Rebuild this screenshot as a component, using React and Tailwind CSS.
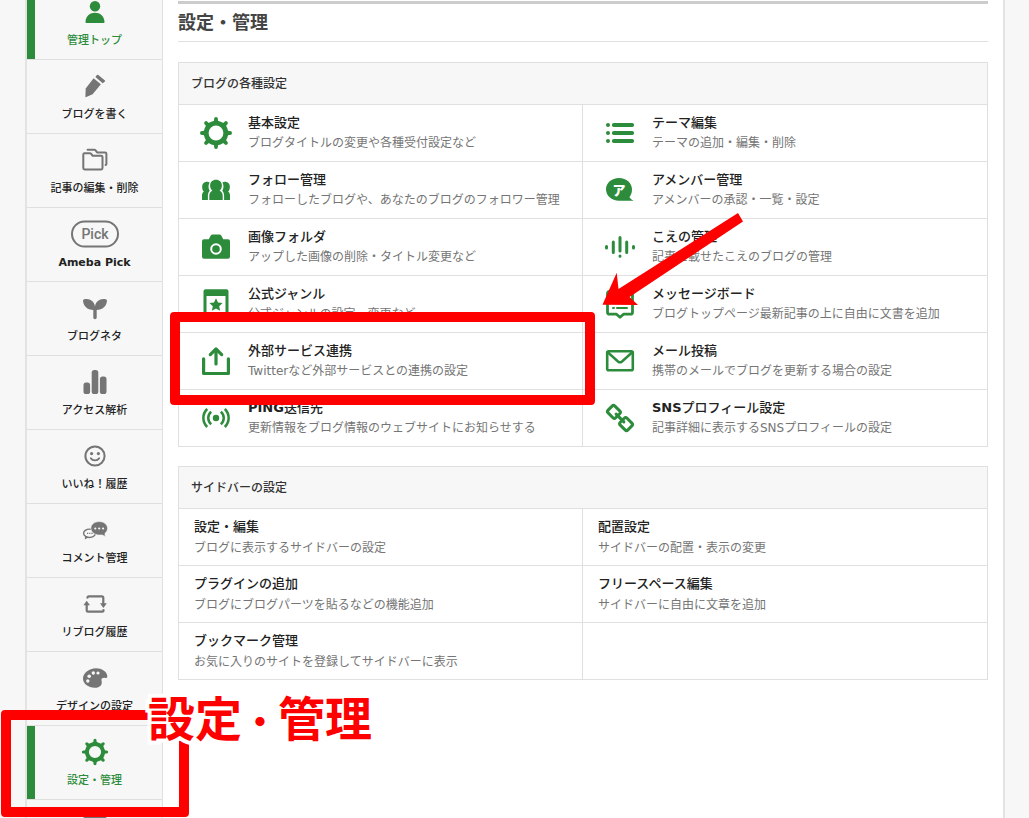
import React from "react";

const star = "M16 10.2l2 4.2 4.6.6-3.4 3.2.9 4.6-4.1-2.3-4.1 2.3.9-4.6-3.4-3.2 4.6-.6z";

function Svg({ box = 28, w, className = "", children }) {
  return (
    <svg
      aria-hidden="true"
      width={w || box}
      height={box}
      viewBox={`0 0 ${w || box} ${box}`}
      fill="currentColor"
      className={`block shrink-0 overflow-visible ${className}`}
    >
      {children}
    </svg>
  );
}

const line = (width) => ({
  fill: "none",
  stroke: "currentColor",
  strokeWidth: width,
  strokeLinecap: "round",
  strokeLinejoin: "round",
});

function GearShape() {
  return (
    <g>
      <circle cx="16" cy="16" r="9.8" fill="none" stroke="currentColor" strokeWidth="4.8" />
      {[0, 45, 90, 135, 180, 225, 270, 315].map((a) => (
        <path
          key={a}
          d="M12 5.8L14.1 3.4V2q0-2 1.9-2t1.9 2v1.4l2.1 2.4z"
          transform={`rotate(${a} 16 16)`}
        />
      ))}
    </g>
  );
}

/* Navigation icons */
const Person = () => (
  <Svg>
    <circle cx="14" cy="8.2" r="5.2" />
    <path d="M5.5 25q-1.2 0-1-1.6C5 18 9 14.8 14 14.8s9 3.2 9.5 8.6q.2 1.6-1 1.6z" />
  </Svg>
);
const Pencil = () => (
  <Svg>
    <path d="M12.6 6.3L19.900 12.200 11.600 22.300 5.300 25.100Q4.400 25.400 4.400 24.500L4.700 16.600z" />
    <path d="M15.900 3.100Q16.500 2.400 17.300 3L23.700 8.200Q24.500 8.800 23.900 9.500L21.700 11.200 14.400 5z" />
  </Svg>
);
const Folders = () => (
  <Svg>
    <path {...line(2)} d="M3.600 7.200h5.300q.8 0 1.300.6l1.500 2h8.500q1.300 0 1.300 1.300v11q0 1.300-1.300 1.300H3.600q-1.300 0-1.300-1.300V8.500q0-1.300 1.300-1.300z" />
    <path {...line(2)} d="M6.600 3.800h6.700q.8 0 1.300.6l1.500 2h8q1.300 0 1.300 1.300v10q0 1-.8 1.300" />
  </Svg>
);
const Pick = () => (
  <Svg w={48}>
    <rect x="1" y="1.500" width="46" height="25" rx="12.500" fill="none" stroke="currentColor" strokeWidth="2" />
    <text x="24" y="18.500" textAnchor="middle" fontSize="14" fontWeight="500" fontFamily="Roboto, sans-serif">
      Pick
    </text>
  </Svg>
);
const Sprout = () => (
  <Svg>
    <path d="M2 6.500q.2-.9 1.200-1.200c5-1.400 10 1.500 10.800 7.200.8-5.700 5.800-8.600 10.800-7.200q1 .3 1.200 1.200c-.2 5.500-4.500 9.500-10.300 9.500v7.600q0 1.600-1.700 1.600t-1.700-1.600V16C6.500 16 2.200 12 2 6.500z" />
  </Svg>
);
const Bars = () => (
  <Svg>
    <rect x="2.500" y="14.500" width="6.600" height="11.500" rx="2.600" />
    <rect x="10.700" y="2" width="6.600" height="24" rx="2.600" />
    <rect x="18.900" y="8.500" width="6.600" height="17.500" rx="2.600" />
  </Svg>
);
const Smile = () => (
  <Svg>
    <circle cx="14" cy="14" r="9.600" fill="none" stroke="currentColor" strokeWidth="2" />
    <circle cx="10.600" cy="11.600" r="1.600" />
    <circle cx="17.400" cy="11.600" r="1.600" />
    <path {...line(1.800)} d="M9.800 16.200c1.800 2.900 6.600 2.900 8.400 0" />
  </Svg>
);
const Comments = () => (
  <Svg>
    <ellipse cx="8.500" cy="17.300" rx="5.900" ry="4.200" fill="none" stroke="currentColor" strokeWidth="1.400" />
    <path d="M4.200 19.500l-.4 3.900 4-2.200z" />
    <path d="M6 17.400h5.600" stroke="currentColor" strokeWidth="1.200" strokeDasharray="1.200 1" />
    <path d="M18.200 5.600c4.700 0 8.300 2.900 8.300 6.700 0 2.200-1 3.900-2.600 5.100l.4 3-3.200-1.500c-6 1-11.200-2-11.200-6.600 0-3.800 3.600-6.700 8.300-6.700z" stroke="#f7f7f7" strokeWidth="0.600" />
    <g fill="#f7f7f7">
      <circle cx="14.300" cy="12.500" r="1.100" />
      <circle cx="18.200" cy="12.500" r="1.100" />
      <circle cx="22.100" cy="12.500" r="1.100" />
    </g>
  </Svg>
);
const Reblog = () => (
  <Svg>
    <path {...line(2.200)} d="M6.500 7.700q0-1.400 1.400-1.400h13q1.400 0 1.400 1.400V14" />
    <path {...line(2.200)} d="M5.700 14v6.300q0 1.400 1.400 1.400h14q1.400 0 1.400-1.400V20" />
    <path d="M19 13.300h6.800l-3.400 4.600zM2.400 15.300h6.600L5.700 10.800z" />
  </Svg>
);
const Palette = () => (
  <Svg>
    <path d="M15 4.300c5.800 0 10.700 3.300 11.300 7.600.2 1.600-.8 2.200-2.200 2-2.500-.4-4.300.8-3.500 3 1 3.500-1.400 6.800-6.800 6.800C7 23.700 2 19.800 2 14.600S7.700 4.300 15 4.300z" />
    <g fill="#f7f7f7">
      <circle cx="6.800" cy="17" r="1.700" />
      <circle cx="8.200" cy="12.200" r="1.800" />
      <circle cx="12.300" cy="9" r="1.700" />
      <circle cx="17" cy="9" r="1.600" />
    </g>
  </Svg>
);
const NavGear = () => (
  <svg aria-hidden="true" width="28" height="28" viewBox="-1 -1 34 34" fill="currentColor" className="block">
    <GearShape />
  </svg>
);
const Monitor = () => (
  <Svg>
    <rect x="2" y="5" width="24" height="18" rx="2" />
  </Svg>
);

/* Settings icons */
const Gear = () => (
  <Svg box={32}>
    <GearShape />
  </Svg>
);
const Followers = () => (
  <Svg box={32}>
    <path d="M5.500 8c1.500-.4 3.200-.3 4.100.4-1.600 2.800-1.400 6 .2 8.400-1.300 1.200-1.900 3-1.900 5V26H2v-4.500c0-1.900.5-3.100 1.900-3.800C2.300 16 2 14.300 2.200 12c.2-2 1.400-3.500 3.300-4z" />
    <path d="M26.500 8c-1.500-.4-3.200-.3-4.100.4 1.600 2.800 1.400 6-.2 8.400 1.300 1.200 1.900 3 1.900 5V26H30v-4.500c0-1.900-.5-3.100-1.900-3.800 1.600-1.700 1.900-3.400 1.700-5.700-.2-2-1.400-3.500-3.300-4z" />
    <path d="M16 5.800c3.500 0 5.900 2.400 5.900 5.600 0 2.500-.9 4-2.300 5.300 2 .9 3.100 2.600 3.100 5V26H9.300v-4.300c0-2.400 1.100-4.100 3.100-5-1.400-1.300-2.300-2.800-2.300-5.300 0-3.200 2.400-5.600 5.900-5.600z" />
  </Svg>
);
const Camera = () => (
  <Svg box={32}>
    <path d="M12.500 3.500h7q1.200 0 1.900 1.200L23.200 8.300H28q2 0 2 2v15.400q0 2-2 2H4q-2 0-2-2V10.300q0-2 2-2h4.800l1.800-3.600q.7-1.200 1.900-1.200z" />
    <circle cx="16" cy="18" r="4.800" fill="none" stroke="white" strokeWidth="2" />
  </Svg>
);
const Genre = () => (
  <Svg box={32}>
    <path
      fillRule="evenodd"
      d="M5.500 1.300h21q2 0 2 2v25.400q0 2-2 2h-21q-2 0-2-2V3.300q0-2 2-2zM6.500 8v19h19V8z"
    />
    <path d={star} />
  </Svg>
);
const Share = () => (
  <Svg box={32}>
    <path {...line(3.200)} d="M3.600 13.800v14.700h24.800V13.800M16 19V5" />
    <path {...line(3.200)} d="M10.300 9.600L16 4l5.700 5.600" />
  </Svg>
);
const Ping = () => (
  <Svg box={32}>
    <circle cx="16" cy="16" r="3.200" />
    <path {...line(2.500)} strokeLinecap="butt" d="M11.200 9.800a8 8 0 0 0 0 12.400M20.800 9.800a8 8 0 0 1 0 12.400M7.200 7a12.500 12.500 0 0 0 0 18M24.800 7a12.500 12.500 0 0 1 0 18" />
  </Svg>
);
const List = () => (
  <Svg box={32}>
    {[8, 16, 24].map((y) => (
      <g key={y}>
        <circle cx="4" cy={y} r="2" />
        <rect x="8" y={y - 2} width="22" height="4" rx="1.800" />
      </g>
    ))}
  </Svg>
);
const Member = () => (
  <Svg box={32}>
    <path d="M15 4c7.500 0 13 5 13 11.300 0 3.600-1 5.900-2.600 8 1.100 1.600 2.300 2.500 4.300 3.400H15C7.500 26.700 2 21.600 2 15.300S7.500 4 15 4z" />
    <text x="15" y="20.500" fill="white" textAnchor="middle" fontSize="13" fontWeight="900" fontFamily="Noto Sans CJK JP, sans-serif">
      ア
    </text>
  </Svg>
);
const Voice = () => (
  <Svg box={32}>
    <path {...line(3)} d="M2.500 15.500v1.500M9.300 11v10.500M16 6.500V20M16 25v.2M22.700 11v10.500M29.500 15.500v1.500" />
  </Svg>
);
const Board = () => (
  <Svg box={32}>
    <path {...line(2.800)} d="M5.500 3.500h21q2 0 2 2v18.700q0 2-2 2h-7L16 29.300l-3.500-3.100h-7q-2 0-2-2V5.500q0-2 2-2z" />
    <path {...line(2)} d="M9 10h1M13 10h10M9 15h1M13 15h10M9 20h1M13 20h10" />
  </Svg>
);
const Mail = () => (
  <Svg box={32}>
    <rect x="3.200" y="6.200" width="25.600" height="19" rx="1.500" {...line(2.600)} />
    <path {...line(2.400)} d="M4 7.500l10 9q2 1.700 4 0l10-9" />
  </Svg>
);
const Link = () => (
  <Svg box={32}>
    <g {...line(3)} transform="rotate(45 16 16)">
      <rect x="2" y="11.200" width="10.800" height="9.600" rx="2" />
      <rect x="19.200" y="11.200" width="10.800" height="9.600" rx="2" />
      <path d="M10.500 16h11" />
    </g>
  </Svg>
);

const navItems = [
  { label: "管理トップ", icon: Person, active: true },
  { label: "ブログを書く", icon: Pencil },
  { label: "記事の編集・削除", icon: Folders },
  { label: "Ameba Pick", icon: Pick },
  { label: "ブログネタ", icon: Sprout },
  { label: "アクセス解析", icon: Bars },
  { label: "いいね！履歴", icon: Smile },
  { label: "コメント管理", icon: Comments },
  { label: "リブログ履歴", icon: Reblog },
  { label: "デザインの設定", icon: Palette },
  { label: "設定・管理", icon: NavGear, active: true, marked: true },
  { label: "", icon: Monitor },
];

const blogSettings = [
  { title: "基本設定", text: "ブログタイトルの変更や各種受付設定など", icon: Gear },
  { title: "テーマ編集", text: "テーマの追加・編集・削除", icon: List },
  { title: "フォロー管理", text: "フォローしたブログや、あなたのブログのフォロワー管理", icon: Followers },
  { title: "アメンバー管理", text: "アメンバーの承認・一覧・設定", icon: Member },
  { title: "画像フォルダ", text: "アップした画像の削除・タイトル変更など", icon: Camera },
  { title: "こえの管理", text: "記事に載せたこえのブログの管理", icon: Voice },
  { title: "公式ジャンル", text: "公式ジャンルの設定、変更など", icon: Genre },
  { title: "メッセージボード", text: "ブログトップページ最新記事の上に自由に文書を追加", icon: Board, arrow: true },
  { title: "外部サービス連携", text: "Twitterなど外部サービスとの連携の設定", icon: Share, marked: true },
  { title: "メール投稿", text: "携帯のメールでブログを更新する場合の設定", icon: Mail },
  { title: "PING送信先", text: "更新情報をブログ情報のウェブサイトにお知らせする", icon: Ping },
  { title: "SNSプロフィール設定", text: "記事詳細に表示するSNSプロフィールの設定", icon: Link },
];

const sidebarSettings = [
  { title: "設定・編集", text: "ブログに表示するサイドバーの設定" },
  { title: "配置設定", text: "サイドバーの配置・表示の変更" },
  { title: "プラグインの追加", text: "ブログにブログパーツを貼るなどの機能追加" },
  { title: "フリースペース編集", text: "サイドバーに自由に文章を追加" },
  { title: "ブックマーク管理", text: "お気に入りのサイトを登録してサイドバーに表示" },
  {},
];

/* Latin words in labels are set bold beside medium Japanese text. */
function Label({ text }) {
  return text.split(/([A-Za-z][A-Za-z ]*)/).map((part, i) =>
    i % 2 ? (
      <span key={i} className="font-bold">
        {part}
      </span>
    ) : (
      part
    ),
  );
}

function NavItem({ label, icon: Icon, active, marked }) {
  return (
    <li className="relative border-b border-[#e0e0e0]">
      <a
        href="#"
        aria-label={label || "その他"}
        className={`flex h-[73px] flex-col items-center pt-3 ${active ? "text-[#2d8c3c]" : "text-[#757575]"}`}
      >
        <Icon />
        <span className={`mt-[5px] text-[11px] leading-5 font-medium ${active ? "" : "text-[#222]"}`}>
          <Label text={label} />
        </span>
      </a>
      {active && <span className="absolute inset-y-0 left-0 w-2 bg-[#2d8c3c]" />}
      {marked && (
        <>
          <span className="pointer-events-none absolute -top-4 -right-[27px] -bottom-[18px] -left-[26px] z-10 rounded border-10 border-[#ff0000]" />
          <span className="pointer-events-none absolute -top-10 left-[121px] z-20 text-[47px] leading-[68px] font-bold whitespace-nowrap text-[#ff0000] [-webkit-text-stroke:8px_white] [paint-order:stroke_fill] [stroke-linejoin:round]">
            設定<span className="text-4xl">・</span>管理
          </span>
        </>
      )}
    </li>
  );
}

function Cell({ title, text, icon: Icon, marked, arrow }) {
  return (
    <li className="relative border-t border-[#e0e0e0] odd:border-r">
      {title ? (
        <a href="#" className={`flex h-14 items-center gap-4 ${Icon ? "pl-[21px]" : "pl-[15px]"}`}>
          {Icon && (
            <span className="text-[#2d8c3c]">
              <Icon />
            </span>
          )}
          <span className="flex flex-col whitespace-nowrap">
            <span className={`text-[13px] font-medium text-[#222] ${Icon ? "leading-5" : "leading-[22px]"}`}>
              <Label text={title} />
            </span>
            <span className="text-xs leading-5 text-[#757575]">{text}</span>
          </span>
        </a>
      ) : (
        <div className="h-14" />
      )}
      {marked && (
        <span className="pointer-events-none absolute -top-[21px] -right-[13px] -bottom-4 -left-[9px] z-10 rounded border-10 border-[#ff0000]" />
      )}
      {arrow && (
        <svg
          aria-hidden="true"
          width="142"
          height="94"
          viewBox="602 212 142 94"
          className="pointer-events-none absolute -top-16 left-[19px] z-10"
        >
          <path d="M738 213l5 8.500-113.500 75.500 8.500 8-35.500-.3 14.200-32 1.800 16.300z" fill="#ff0000" />
        </svg>
      )}
    </li>
  );
}

function Panel({ title, items, className }) {
  return (
    <section className={`border border-[#e0e0e0] ${className}`}>
      <h2 className="flex h-[41px] items-center bg-[#f7f7f7] pl-3 text-xs font-medium text-[#333]">{title}</h2>
      <ul className="grid grid-cols-2">
        {items.map((item, i) => (
          <Cell key={i} {...item} />
        ))}
      </ul>
    </section>
  );
}

export default function App() {
  return (
    <div
      lang="ja"
      className="h-screen overflow-hidden bg-[#f7f7f7] pr-6 pl-[25px] font-['DejaVu_Sans','Noto_Sans_CJK_JP',sans-serif]"
    >
      <div className="flex min-h-screen border-x-2 border-[#e3e3e3] bg-white">
        <nav className="-mt-3.5 h-fit w-[136px] shrink-0 border-r border-[#e0e0e0] bg-[#f7f7f7]">
          <ul>
            {navItems.map((item, i) => (
              <NavItem key={i} {...item} />
            ))}
          </ul>
        </nav>
        <main className="min-w-0 flex-1 px-[15px] pt-px">
          <h1 className="flex h-[41px] items-center border-t-3 border-b border-t-[#ccc] border-b-[#e0e0e0] text-lg leading-none font-bold text-[#444]">
            設定・管理
          </h1>
          <Panel title="ブログの各種設定" items={blogSettings} className="mt-5" />
          <Panel title="サイドバーの設定" items={sidebarSettings} className="mt-[19px]" />
        </main>
      </div>
    </div>
  );
}
